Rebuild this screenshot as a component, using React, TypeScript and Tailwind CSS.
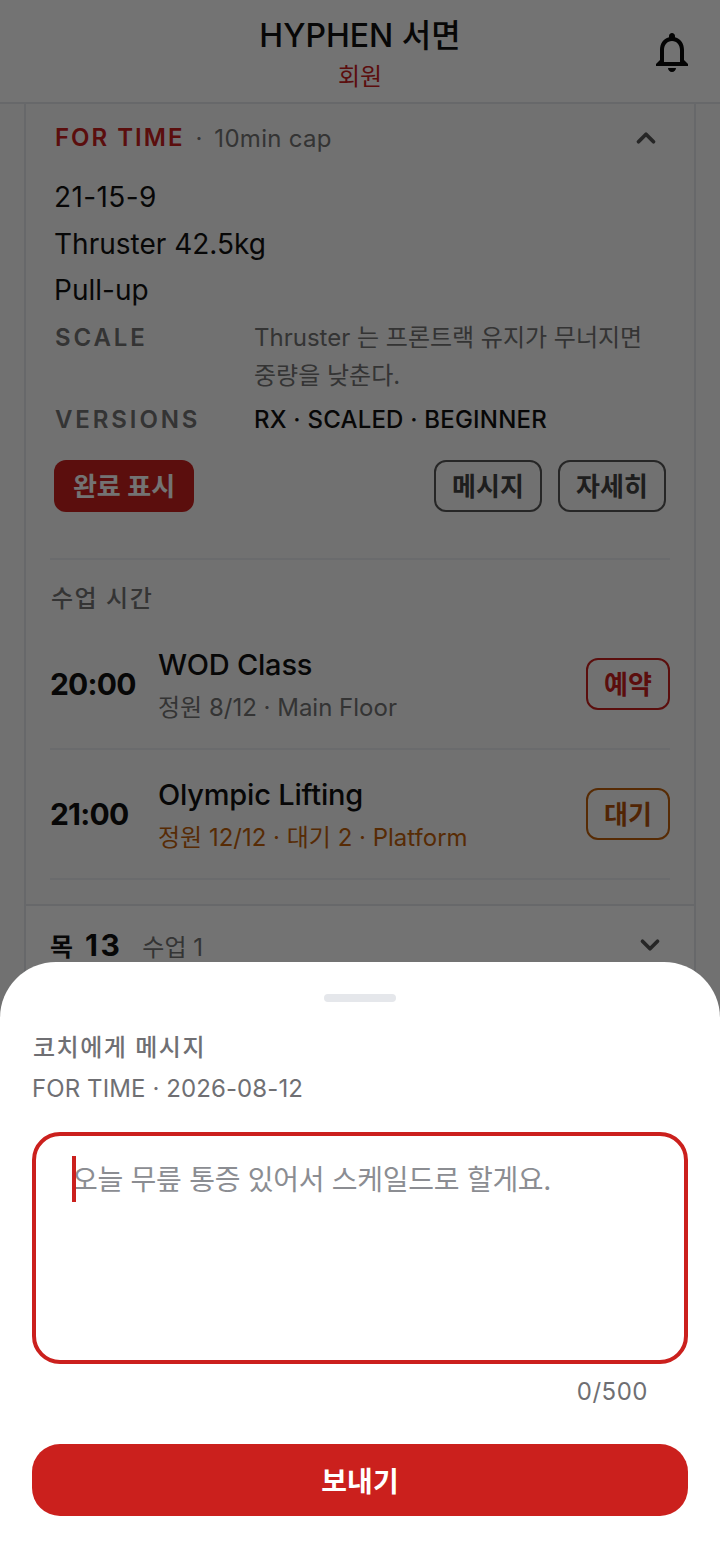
import { ChevronDown, ChevronUp } from "lucide-react";

const font = { fontFamily: '"Inter", "Noto Sans CJK KR", sans-serif' };

const classes = [
  { time: "20:00", name: "WOD Class", info: "정원 8/12 · Main Floor", action: "예약", full: false },
  { time: "21:00", name: "Olympic Lifting", info: "정원 12/12 · 대기 2 · Platform", action: "대기", full: true },
];

const BellIcon = () => (
  <svg viewBox="0 0 24 24" className="w-12 h-12" fill="#0a0a0a">
    <path d="M12 22c1.1 0 2-.9 2-2h-4c0 1.1.89 2 2 2zm6-6v-5c0-3.07-1.64-5.64-4.5-6.32V4c0-.83-.67-1.5-1.5-1.5s-1.5.67-1.5 1.5v.68C7.63 5.36 6 7.92 6 11v5l-2 2v1h16v-1l-2-2zm-2 1H8v-6c0-2.48 1.51-4.5 4-4.5s4 2.02 4 4.5v6z" />
  </svg>
);

const ClassRow = ({ item }: { item: (typeof classes)[number] }) => (
  <div className="flex items-center h-[130px] border-b-2 border-[#eceef1]">
    <div className="w-[107px] pt-[2px] text-[30px] tracking-[-0.8px] font-bold text-[#111111]">{item.time}</div>
    <div className="flex-1 flex flex-col gap-[6px] pt-[5px] pl-px">
      <div className="text-[29px] leading-[38px] tracking-[-0.2px] font-medium text-[#111111]">{item.name}</div>
      <div className={`text-[24px] leading-[36px] ${item.full ? "text-[#c2600a]" : "text-[#737373]"}`}>{item.info}</div>
    </div>
    <button
      className={`w-[84px] h-[52px] pt-[2px] rounded-xl border-2 text-[26px] font-semibold ${
        item.full ? "border-[#c2600a] text-[#b4530a]" : "border-[#cb201d] text-[#cb201d]"
      }`}
    >
      {item.action}
    </button>
  </div>
);

export default function App() {
  return (
    <div className="relative w-[720px] h-[1560px] overflow-hidden bg-[#fafafa]" style={font}>
      <header className="flex items-center justify-center relative h-[104px] bg-white border-b-2 border-[#e5e7eb]">
        <div className="flex flex-col items-center pt-[6px]">
          <div className="text-[32px] leading-[44px] font-medium text-[#111111]">HYPHEN 서면</div>
          <div className="mt-[2px] text-[24px] leading-[34px] text-[#cb201d]">회원</div>
        </div>
        <div className="absolute right-6 top-7">
          <BellIcon />
        </div>
      </header>

      <main className="px-6">
        <div className="border-x-2 border-[#e5e7eb]">
          <div className="bg-[#fafafa]">
            <div className="pl-[28px] pr-[28px] pt-[14px]">
              <div className="flex items-center justify-between h-[40px]">
                <div className="flex items-center">
                  <span className="pl-px text-[24px] font-semibold tracking-[2px] text-[#cb201d]">FOR TIME</span>
                  <span className="ml-[11px] pt-px text-[24px] text-[#737373]">·</span>
                  <span className="ml-[12px] pt-[2px] text-[24px] tracking-[0.3px] text-[#737373]">10min cap</span>
                </div>
                <ChevronUp size={30} strokeWidth={3} className="text-[#555555] mr-[5px]" />
              </div>
              <div className="mt-[16px] text-[28px] leading-[46.5px] text-[#111111]">
                <div className="tracking-[0.4px]">21-15-9</div>
                <div>Thruster 42.5kg</div>
                <div>Pull-up</div>
              </div>
              <div className="flex mt-[5px]">
                <div className="w-[200px] pl-px text-[24px] leading-[38px] font-semibold tracking-[2.9px] text-[#737373]">SCALE</div>
                <div className="flex-1 text-[24px] leading-[38px] text-[#737373]">Thruster 는 프론트랙 유지가 무너지면 중량을 낮춘다.</div>
              </div>
              <div className="flex mt-[6px] items-center">
                <div className="w-[200px] pl-px text-[24px] leading-[38px] font-semibold tracking-[2.9px] text-[#737373]">VERSIONS</div>
                <div className="flex-1 text-[24px] leading-[38px] tracking-[0.2px] font-medium text-[#111111]">RX · SCALED · BEGINNER</div>
              </div>
              <div className="flex items-center mt-[21px]">
                <button className="w-[140px] h-[52px] pt-[2px] rounded-xl bg-[#cb201d] text-white text-[26px] font-semibold">완료 표시</button>
                <div className="ml-auto flex gap-[16px]">
                  <button className="w-[108px] h-[52px] pt-px rounded-xl border-2 border-[#555555] text-[#444444] text-[26px] font-semibold">메시지</button>
                  <button className="w-[108px] h-[52px] pt-px rounded-xl border-2 border-[#555555] text-[#444444] text-[26px] font-semibold">자세히</button>
                </div>
              </div>
            </div>
            <div className="px-[24px] mt-[46px] pb-[24px]">
              <div className="border-t-2 border-[#eceef1] pt-[21px] pl-px text-[24px] leading-[36px] font-medium tracking-[1.5px] text-[#737373]">수업 시간</div>
              <div className="mt-[3px]">
                {classes.map((item) => (
                  <ClassRow key={item.time} item={item} />
                ))}
              </div>
            </div>
          </div>
          <div className="flex items-center justify-between h-[80px] pl-[24px] pr-[29px] bg-white border-t-2 border-[#e5e7eb]">
            <div className="flex items-baseline pt-[2px]">
              <span className="text-[25px] font-bold text-[#111111]">목</span>
              <span className="ml-[12px] text-[30px] tracking-[2.5px] font-bold text-[#111111]">13</span>
              <span className="text-[24px] text-[#737373] ml-[20px]">수업 1</span>
            </div>
            <ChevronDown size={30} strokeWidth={3} className="text-[#555555]" />
          </div>
        </div>
      </main>

      {/* dim layer under the sheet */}
      <div className="absolute inset-0 bg-black/55" />

      <div className="absolute left-0 right-0 bottom-0 h-[598px] bg-white rounded-t-[56px] px-8 pt-8">
        <div className="w-[72px] h-2 rounded-full bg-[#e5e7eb] mx-auto" />
        <div className="mt-[28px] pl-px text-[24px] leading-[36px] font-medium tracking-[1.5px] text-[#6f6f73]">코치에게 메시지</div>
        <div className="mt-[5px] text-[24px] leading-[36px] tracking-[0.1px] text-[#6f6f73]">FOR TIME · 2026-08-12</div>
        <div className="relative mt-[25px] h-[232px] rounded-[28px] border-4 border-[#cb201d] pl-[36px] pt-[22px] text-[28px] leading-[44px] tracking-[-0.27px] text-[#8b8d92]">
          오늘 무릎 통증 있어서 스케일드로 할게요.
          <span className="absolute left-[36px] top-[20px] w-1 h-[46px] bg-[#cb201d]" />
        </div>
        <div className="mt-[10px] pr-10 text-right text-[24px] leading-[36px] tracking-[0.5px] text-[#6f6f73]">0/500</div>
        <button className="mt-[34px] w-full h-[72px] pt-[4px] rounded-[28px] bg-[#cb201d] text-white text-[28px] font-semibold">보내기</button>
      </div>
    </div>
  );
}
